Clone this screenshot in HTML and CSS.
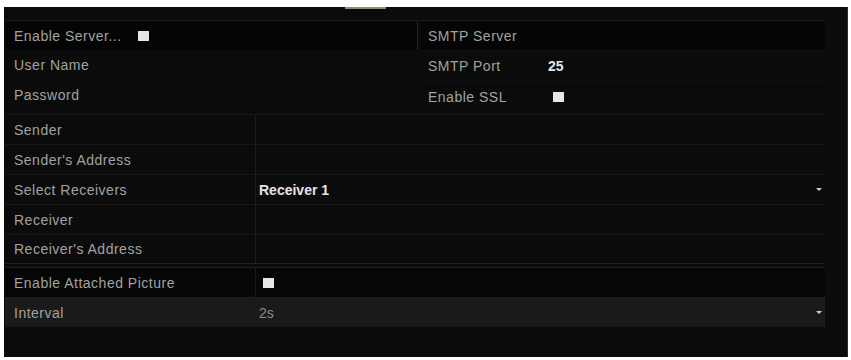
FILE: index.html
```html
<!DOCTYPE html>
<html>
<head>
<meta charset="utf-8">
<link rel="stylesheet" href="styles.css">
</head>
<body>
<div class="frame">
  <div class="tabline"></div>
  <div class="top">
    <div class="col left">
      <div class="row boxed"><span class="lbl">Enable Server...</span><span class="chk chk-inline"></span></div>
      <div class="row"><span class="lbl">User Name</span></div>
      <div class="row"><span class="lbl">Password</span></div>
    </div>
    <div class="col right">
      <div class="row boxed"><span class="lbl rl">SMTP Server</span></div>
      <div class="row sep"><span class="lbl rl">SMTP Port</span><span class="val bright">25</span></div>
      <div class="row sep"><span class="lbl rl">Enable SSL</span><span class="chk chk-ssl"></span></div>
    </div>
  </div>
  <div class="list">
    <div class="item"><div class="k">Sender</div><div class="v"></div></div>
    <div class="item"><div class="k">Sender's Address</div><div class="v"></div></div>
    <div class="item"><div class="k">Select Receivers</div><div class="v bright">Receiver 1<span class="arrow"></span></div></div>
    <div class="item"><div class="k">Receiver</div><div class="v"></div></div>
    <div class="item last"><div class="k">Receiver's Address</div><div class="v"></div></div>
    <div class="item gap"><div class="k">Enable Attached Picture</div><div class="v"><span class="chk"></span></div></div>
    <div class="item band"><div class="k">Interval</div><div class="v dim">2s<span class="arrow"></span></div></div>
  </div>
</div>
</body>
</html>
```
FILE: styles.css
```css
html, body { margin: 0; padding: 0; background: #ffffff; }
body { font-family: "Liberation Sans", Arial, sans-serif; }
.frame {
  margin: 7px 3px 0 4px;
  height: 350px;
  background: #0b0b0b;
  padding: 0 22px 0 1px;
  box-sizing: border-box;
  border-right: 1px solid #2a2a2a;
}
.tabline {
  margin-left: 340px;
  width: 41px;
  height: 2px;
  background: #8f8e6a;
  margin-bottom: 11px;
}
.top { display: grid; grid-template-columns: 413px 1fr; column-gap: 2px; }
.row {
  height: 30px;
  display: flex;
  align-items: center;
  font-size: 14px;
  color: #a2a2a2;
}
.left .row { padding-left: 9px; }
.right .row { padding-left: 8px; }
.boxed { background: #050505; border-top: 1px solid #1c1c1c; box-sizing: border-box; }
.left .boxed { border-right: 1px solid #222; }
.sep { border-top: 1px solid #141414; }
.lbl { letter-spacing: 0.5px; }
.rl { width: 120px; }
.val { font-weight: bold; }
.bright { color: #e4e4e4; font-weight: bold; }
.dim { color: #8a8a8a; }
.chk {
  display: inline-block;
  width: 11px;
  height: 10px;
  background: #e6e6e6;
}
.chk-inline { margin-left: 16px; }
.chk-ssl { margin-left: 5px; }
.list { margin-top: 2px; }
.item {
  display: grid;
  grid-template-columns: 250px 1fr;
  height: 30px;
  border-top: 1px solid #181818;
  box-sizing: border-box;
  font-size: 14px;
}
.item.last { border-bottom: 1px solid #222; }
.item.gap { margin-top: 3px; border-top: 1px solid #222; background: #060606; }
.item.band { background: #1a1a1a; border-top: 1px solid #202020; }
.k {
  padding-left: 9px;
  display: flex;
  align-items: center;
  color: #a2a2a2;
  letter-spacing: 0.5px;
}
.v {
  border-left: 1px solid #1a1a1a;
  padding-left: 3px;
  display: flex;
  align-items: center;
  position: relative;
}
.v .chk { margin-left: 4px; }
.arrow {
  position: absolute;
  right: 3px;
  top: 13px;
  width: 0;
  height: 0;
  border-left: 3px solid transparent;
  border-right: 3px solid transparent;
  border-top: 3px solid #cfcfcf;
}
```
